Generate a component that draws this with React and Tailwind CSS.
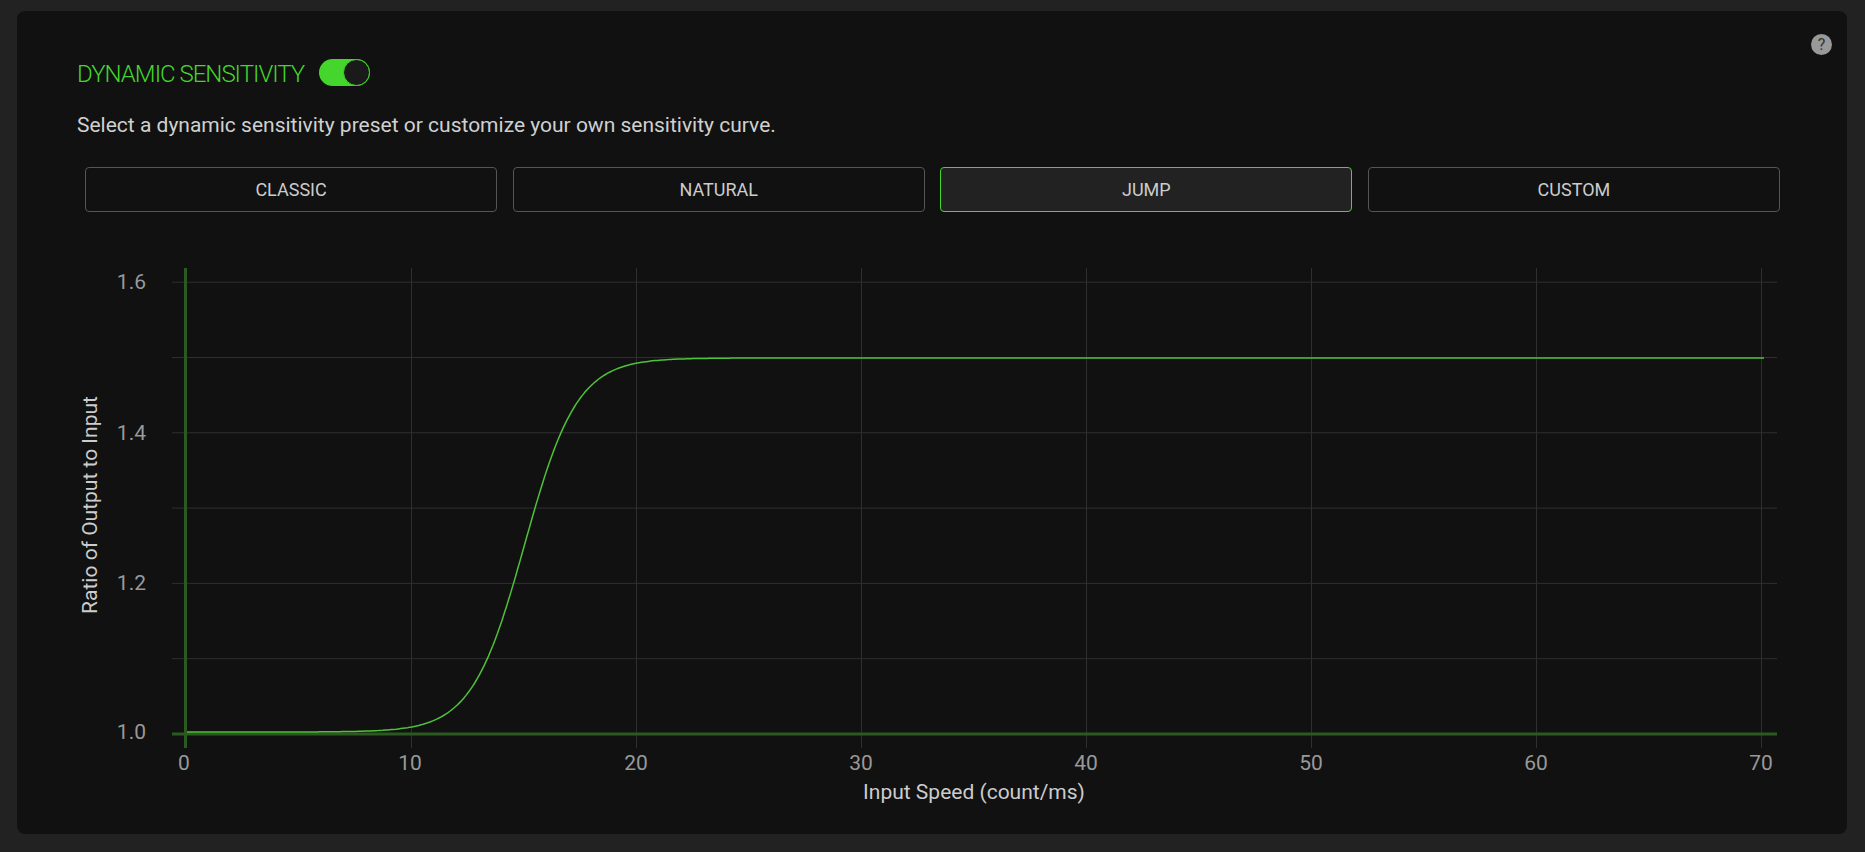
import React from 'react';

const presets = ['CLASSIC', 'NATURAL', 'JUMP', 'CUSTOM'];

const xAt = (v) => 186 + v * 22.5;
const yAt = (v) => 734 - (v - 1) * 753;

const curvePoints = () => {
  const pts = [];
  for (let x = 0; x <= 70; x += 0.1) {
    const s = 1 / (1 + Math.exp(-(x - 15) / 1.17));
    pts.push(`${(xAt(x) + 1).toFixed(1)},${(732 - 374 * s).toFixed(1)}`);
  }
  pts.push('1764,358');
  return pts.join(' ');
};

const Chart = () => {
  const hLines = [1.1, 1.2, 1.3, 1.4, 1.5, 1.6];
  const vLines = [10, 20, 30, 40, 50, 60, 70];

  return (
    <svg className="block mt-[48px] w-[1830px] h-[560px]" viewBox="17 260 1830 560">
      {hLines.map((v) => (
        <line key={v} x1="172" x2="1777" y1={yAt(v)} y2={yAt(v)} stroke="#2f2f2f" strokeWidth="1" />
      ))}
      {vLines.map((v) => (
        <line key={v} x1={xAt(v) + 0.5} x2={xAt(v) + 0.5} y1="268" y2="748" stroke="#2f2f2f" strokeWidth="1" />
      ))}
      <line x1="172" x2="1777" y1="734" y2="734" stroke="#2a5a20" strokeWidth="3" />
      <line x1="185.5" x2="185.5" y1="268" y2="748" stroke="#2a5a20" strokeWidth="3" />
      <polyline points={curvePoints()} fill="none" stroke="#4fc13a" strokeWidth="1.5" />

      {[1.6, 1.4, 1.2, 1.0].map((v) => (
        <text key={v} x="146" y={v === 1 ? 739 : yAt(v) + 7} textAnchor="end" fill="#999" fontSize="21" fontFamily="Roboto, sans-serif">
          {v.toFixed(1)}
        </text>
      ))}
      {[0, 10, 20, 30, 40, 50, 60, 70].map((v) => (
        <text key={v} x={xAt(v) - (v === 0 ? 2 : v === 10 ? 1 : 0)} y="770" textAnchor="middle" fill="#999" fontSize="21" fontFamily="Roboto, sans-serif">
          {v}
        </text>
      ))}
      <text x="974" y="799" textAnchor="middle" fill="#ccc" fontSize="21" fontFamily="Roboto, sans-serif">
        Input Speed (count/ms)
      </text>
      <text transform="translate(97 505) rotate(-90)" textAnchor="middle" fill="#ccc" fontSize="21" fontFamily="Roboto, sans-serif">
        Ratio of Output to Input
      </text>
    </svg>
  );
};

export default function App() {
  return (
    <div className="h-[852px] bg-[#222222] pl-[17px] pr-[18px] pt-[11px] pb-[18px] font-['Roboto',sans-serif] overflow-hidden">
      <div className="relative h-full rounded-lg bg-[#111111]">
        <div className="absolute right-[15px] top-[23px] flex h-[21px] w-[21px] items-center justify-center rounded-full bg-[#999999] text-[16px] leading-none text-[#333333]">
          ?
        </div>

        <div className="pl-[60px] pt-[48px]">
          <div className="flex h-[27px] items-center gap-[15px]">
            <h2 className="pt-[2px] text-[24px] font-light leading-none tracking-[-1px] text-[#44d62c]">DYNAMIC SENSITIVITY</h2>
            <div className="flex h-[27px] w-[51px] items-center justify-end rounded-full bg-[#44d62c]">
              <div className="h-[27px] w-[27px] rounded-full border border-[#44d62c] bg-[#1a1a1a]" />
            </div>
          </div>
          <p className="mt-[26px] text-[21px] leading-[26px] text-[#d0d0d0]">
            Select a dynamic sensitivity preset or customize your own sensitivity curve.
          </p>
        </div>

        <div className="mt-[29px] ml-[68px] mr-[67px] grid grid-cols-4 gap-[15.5px]">
          {presets.map((name) => (
            <button
              key={name}
              className={
                name === 'JUMP'
                  ? 'h-[45px] rounded-[4px] border border-[#44d62c] bg-[#222222] text-[18px] text-[#cccccc]'
                  : 'h-[45px] rounded-[4px] border border-[#555555] bg-[#111111] text-[18px] text-[#cccccc]'
              }
            >
              {name}
            </button>
          ))}
        </div>

        <Chart />
      </div>
    </div>
  );
}
